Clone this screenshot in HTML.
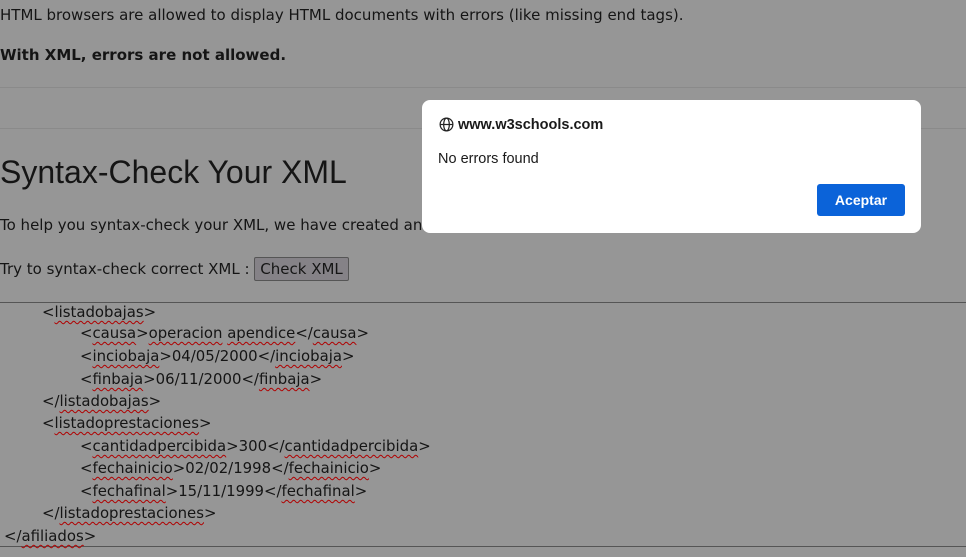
<!DOCTYPE html>
<html><head><meta charset="utf-8"><style>
body{margin:0;width:966px;height:557px;background:#969696;overflow:hidden;position:relative;font-family:"DejaVu Sans","Liberation Sans",sans-serif;color:#151515}
.a{position:absolute;white-space:nowrap}
p.a{margin:0;font-size:15px}
.hr{position:absolute;left:0;width:966px;height:1px;background:#8a8a8a}
h1.a{margin:0;font-family:"Liberation Sans",sans-serif;font-weight:normal;font-size:32px}
.btn{display:inline-block;background:#858287;border:1px solid #555;border-radius:2px;padding:2px 5px;font-size:15px}
.ta{position:absolute;left:0;top:302px;width:966px;height:243px;border-top:1px solid #555;border-bottom:1px solid #555}
.l{position:absolute;font-size:14.9px;white-space:nowrap}
u{text-decoration:underline wavy #b00000;text-underline-offset:3px;text-decoration-thickness:1px}
.dlg{position:absolute;left:422px;top:100px;width:499px;height:133px;background:#fff;border-radius:8px;font-family:"Liberation Sans","DejaVu Sans",sans-serif}
.ok{position:absolute;left:395px;top:84px;width:88px;height:32px;background:#0b63d9;border-radius:3px;color:#fff;font-weight:bold;font-size:14px;text-align:center;line-height:32px;font-family:"Liberation Sans",sans-serif}
</style></head><body>
<p class="a" style="left:0;top:6px">HTML browsers are allowed to display HTML documents with errors (like missing end tags).</p>
<p class="a" style="left:0;top:46px;font-weight:bold">With XML, errors are not allowed.</p>
<div class="hr" style="top:87px"></div>
<div class="hr" style="top:128px"></div>
<h1 class="a" style="left:0;top:154px">Syntax-Check Your XML</h1>
<p class="a" style="left:0;top:216px">To help you syntax-check your XML, we have created an</p>
<p class="a" style="left:0;top:257px">Try to syntax-check correct XML : <span class="btn">Check XML</span></p>
<div class="ta">
<div class="l" style="left:42px;top:0px">&lt;<u>listadobajas</u>&gt;</div>
<div class="l" style="left:80px;top:21px">&lt;<u>causa</u>&gt;<u>operacion</u> <u>apendice</u>&lt;/<u>causa</u>&gt;</div>
<div class="l" style="left:80px;top:44px">&lt;<u>inciobaja</u>&gt;04/05/2000&lt;/<u>inciobaja</u>&gt;</div>
<div class="l" style="left:80px;top:67px">&lt;<u>finbaja</u>&gt;06/11/2000&lt;/<u>finbaja</u>&gt;</div>
<div class="l" style="left:42px;top:89px">&lt;/<u>listadobajas</u>&gt;</div>
<div class="l" style="left:42px;top:111px">&lt;<u>listadoprestaciones</u>&gt;</div>
<div class="l" style="left:80px;top:134px">&lt;<u>cantidadpercibida</u>&gt;300&lt;/<u>cantidadpercibida</u>&gt;</div>
<div class="l" style="left:80px;top:156px">&lt;<u>fechainicio</u>&gt;02/02/1998&lt;/<u>fechainicio</u>&gt;</div>
<div class="l" style="left:80px;top:179px">&lt;<u>fechafinal</u>&gt;15/11/1999&lt;/<u>fechafinal</u>&gt;</div>
<div class="l" style="left:42px;top:201px">&lt;/<u>listadoprestaciones</u>&gt;</div>
<div class="l" style="left:4px;top:224px">&lt;/<u>afiliados</u>&gt;</div>
</div>
<div class="dlg">
<svg style="position:absolute;left:17px;top:17px" width="15" height="15" viewBox="0 0 16 16" fill="none" stroke="#222" stroke-width="1.3"><circle cx="8" cy="8" r="6.8"/><ellipse cx="8" cy="8" rx="3" ry="6.8"/><path d="M1.2 8h13.6"/></svg>
<div class="a" style="left:36px;top:17px;font-weight:bold;font-size:14.5px;color:#1a1a1a">www.w3schools.com</div>
<div class="a" style="left:16px;top:51px;font-size:14.5px;color:#1a1a1a">No errors found</div>
<div class="ok">Aceptar</div>
</div>
</body></html>
